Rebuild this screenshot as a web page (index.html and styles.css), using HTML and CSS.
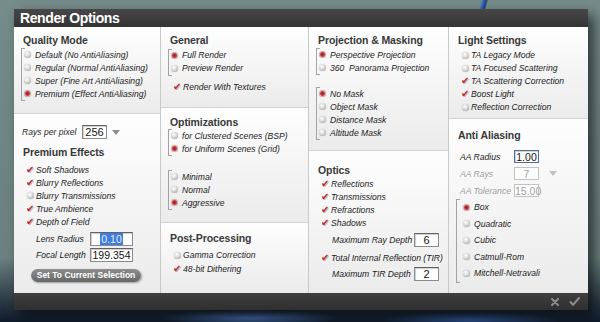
FILE: index.html
```html
<!DOCTYPE html>
<html lang="en">
<head>
    <meta charset="UTF-8">
    <meta name="viewport" content="width=device-width, initial-scale=1.0">
    <title>Render Options</title>
    <link rel="stylesheet" href="styles.css">
</head>
<body>
    <div class="dialog">
        <div class="titlebar">Render Options</div>

        <div class="panel">
            <!-- Column 1 -->
            <div class="col">
                <div class="sec sec-quality">
                    <div class="hd">Quality Mode</div>
                    <div class="grp grp-top">
                        <div class="item"><span class="radio"></span>Default (No AntiAliasing)</div>
                        <div class="item"><span class="radio"></span>Regular (Normal AntiAliasing)</div>
                        <div class="item"><span class="radio"></span>Super (Fine Art AntiAliasing)</div>
                        <div class="item"><span class="radio on"></span>Premium (Effect AntiAliasing)</div>
                    </div>
                </div>
                <div class="sec sec-effects">
                    <div class="rays">
                        <span class="rays-label">Rays per pixel</span>
                        <span class="box box-rays">256</span>
                        <span class="arrow"></span>
                    </div>
                    <div class="hd hd-gap">Premium Effects</div>
                    <div class="list list-effects">
                        <div class="item chk"><span class="tick">✔</span>Soft Shadows</div>
                        <div class="item chk"><span class="tick">✔</span>Blurry Reflections</div>
                        <div class="item chk"><span class="radio"></span>Blurry Transmissions</div>
                        <div class="item chk"><span class="tick">✔</span>True Ambience</div>
                        <div class="item chk"><span class="tick">✔</span>Depth of Field</div>
                    </div>
                    <div class="field field-lens">
                        <span class="flabel">Lens Radius</span>
                        <span class="box box-wide"><span class="sel">0.10</span></span>
                    </div>
                    <div class="field field-lens field-next">
                        <span class="flabel">Focal Length</span>
                        <span class="box box-wide">199.354</span>
                    </div>
                    <div class="btn">Set To Current Selection</div>
                </div>
            </div>

            <!-- Column 2 -->
            <div class="col">
                <div class="sec sec-general">
                    <div class="hd">General</div>
                    <div class="grp grp-general">
                        <div class="item"><span class="radio on"></span>Full Render</div>
                        <div class="item"><span class="radio"></span>Preview Render</div>
                    </div>
                    <div class="item chk item-textures"><span class="tick">✔</span>Render With Textures</div>
                </div>
                <div class="sec sec-optim">
                    <div class="hd">Optimizations</div>
                    <div class="grp">
                        <div class="item"><span class="radio"></span>for Clustered Scenes (BSP)</div>
                        <div class="item"><span class="radio on"></span>for Uniform Scenes (Grid)</div>
                    </div>
                    <div class="grp grp-apart">
                        <div class="item"><span class="radio"></span>Minimal</div>
                        <div class="item"><span class="radio"></span>Normal</div>
                        <div class="item"><span class="radio on"></span>Aggressive</div>
                    </div>
                </div>
                <div class="sec sec-post">
                    <div class="hd">Post-Processing</div>
                    <div class="list list-post">
                        <div class="item chk"><span class="radio"></span>Gamma Correction</div>
                        <div class="item chk"><span class="tick">✔</span>48-bit Dithering</div>
                    </div>
                </div>
            </div>

            <!-- Column 3 -->
            <div class="col">
                <div class="sec sec-projection">
                    <div class="hd">Projection &amp; Masking</div>
                    <div class="grp grp-top">
                        <div class="item"><span class="radio on"></span>Perspective Projection</div>
                        <div class="item"><span class="radio"></span>360&nbsp; Panorama Projection</div>
                    </div>
                    <div class="grp grp-mask">
                        <div class="item"><span class="radio on"></span>No Mask</div>
                        <div class="item"><span class="radio"></span>Object Mask</div>
                        <div class="item"><span class="radio"></span>Distance Mask</div>
                        <div class="item"><span class="radio"></span>Altitude Mask</div>
                    </div>
                </div>
                <div class="sec sec-optics">
                    <div class="hd">Optics</div>
                    <div class="list">
                        <div class="item chk"><span class="tick">✔</span>Reflections</div>
                        <div class="item chk"><span class="tick">✔</span>Transmissions</div>
                        <div class="item chk"><span class="tick">✔</span>Refractions</div>
                        <div class="item chk"><span class="tick">✔</span>Shadows</div>
                    </div>
                    <div class="field field-depth">
                        <span class="flabel">Maximum Ray Depth</span>
                        <span class="box box-small">6</span>
                    </div>
                    <div class="item chk item-tir"><span class="tick">✔</span>Total Internal Reflection (TIR)</div>
                    <div class="field field-depth field-tir">
                        <span class="flabel">Maximum TIR Depth</span>
                        <span class="box box-small">2</span>
                    </div>
                </div>
            </div>

            <!-- Column 4 -->
            <div class="col">
                <div class="sec sec-light">
                    <div class="hd">Light Settings</div>
                    <div class="list list-light">
                        <div class="item chk"><span class="radio"></span>TA Legacy Mode</div>
                        <div class="item chk"><span class="radio"></span>TA Focused Scattering</div>
                        <div class="item chk"><span class="tick">✔</span>TA Scattering Correction</div>
                        <div class="item chk"><span class="tick">✔</span>Boost Light</div>
                        <div class="item chk"><span class="radio"></span>Reflection Correction</div>
                    </div>
                </div>
                <div class="sec sec-aa">
                    <div class="hd">Anti Aliasing</div>
                    <div class="aa-fields">
                        <div class="field field-aa">
                            <span class="flabel">AA Radius</span>
                            <span class="box box-aa focus">1.00</span>
                        </div>
                        <div class="field field-aa off">
                            <span class="flabel">AA Rays</span>
                            <span class="box box-aa">7</span>
                            <span class="arrow arrow-off"></span>
                        </div>
                        <div class="field field-aa off">
                            <span class="flabel">AA Tolerance</span>
                            <span class="box box-aa">15.00</span>
                        </div>
                    </div>
                    <div class="grp grp-filter">
                        <div class="item"><span class="radio on"></span>Box</div>
                        <div class="item"><span class="radio"></span>Quadratic</div>
                        <div class="item"><span class="radio"></span>Cubic</div>
                        <div class="item"><span class="radio"></span>Catmull-Rom</div>
                        <div class="item"><span class="radio"></span>Mitchell-Netravali</div>
                    </div>
                </div>
            </div>
        </div>

        <div class="footer">
            <svg class="icon" width="8" height="8" viewBox="0 0 8 8"><path d="M1 1 L7 7 M7 1 L1 7"/></svg>
            <svg class="icon" width="11" height="9" viewBox="0 0 11 9"><path d="M1.5 5 L4 7.8 L10 1"/></svg>
        </div>
    </div>
</body>
</html>
```

FILE: styles.css
```css
body {
    margin: 0;
    height: 322px;
    overflow: hidden;
    font-family: 'Liberation Sans', Arial, sans-serif;
    color: #1c1c1c;
    background:
        linear-gradient(105deg, transparent 35%, #3f6fc4 45%, #1d3f86 60%, transparent 70%) 474px 0 / 18px 10px no-repeat,
        radial-gradient(ellipse 90px 8px at 250px 318px, rgba(80, 130, 210, 0.7), transparent),
        radial-gradient(ellipse 90px 8px at 470px 320px, rgba(60, 110, 200, 0.6), transparent),
        linear-gradient(to bottom, #768c8a 0, #6b817f 80%, #24323f 95%, #0f1b2b 100%);
}

.dialog {
    width: 574px;
    margin: 9px 0 0 14px;
    box-shadow: 6px 6px 12px rgba(0, 0, 0, 0.6);
}

.titlebar {
    height: 18px;
    line-height: 19px;
    padding-left: 6px;
    background: linear-gradient(#474747, #343434);
    color: #fff;
    font-size: 14px;
    font-weight: bold;
    letter-spacing: -0.4px;
}

.panel {
    display: grid;
    grid-template-columns: 146px 148px 140px 140px;
    height: 266px;
    background: #eee;
}

.col {
    display: flex;
    flex-direction: column;
    border-left: 1px solid #c9c9c9;
}

.col:first-child {
    border-left: none;
}

.sec {
    box-sizing: border-box;
    padding-top: 6px;
    background: linear-gradient(#fefefe, #ebebeb);
    border-top: 1px solid #d3d3d3;
}

.sec:first-child {
    border-top: none;
}

.sec:last-child {
    flex: 1;
}

.hd {
    margin-left: 9px;
    height: 14px;
    line-height: 14px;
    font-size: 10.5px;
    font-weight: bold;
    color: #383838;
    letter-spacing: -0.1px;
}

.item {
    display: flex;
    align-items: center;
    height: 13px;
    font-size: 8.6px;
    font-style: italic;
    white-space: nowrap;
}

.item.chk {
    padding-left: 12px;
}

.grp {
    margin-left: 7px;
    padding: 0 0 1px 2px;
    border-left: 1px solid #a2a2a2;
    background:
        linear-gradient(#a2a2a2, #a2a2a2) left top / 3px 1px no-repeat,
        linear-gradient(#a2a2a2, #a2a2a2) left bottom / 3px 1px no-repeat;
}

.radio {
    flex: none;
    width: 7px;
    height: 7px;
    margin-right: 4px;
    border-radius: 50%;
    background: radial-gradient(circle at 40% 35%, #fff 0, #dedede 40%, #979797 100%);
    box-shadow: 0 0 1px rgba(0, 0, 0, 0.3);
}

.radio.on {
    background: radial-gradient(circle at 50% 50%, #9e1a22 0, #c23a40 38%, #dca9aa 58%, #9c9c9c 100%);
}

.item.chk .radio {
    margin-left: 1px;
    margin-right: 2px;
}

.tick {
    flex: none;
    width: 8px;
    margin-right: 2px;
    font-family: 'DejaVu Sans', sans-serif;
    font-style: normal;
    font-size: 10px;
    line-height: 10px;
    color: #c0262d;
    text-shadow: 1px 1px 0 rgba(0, 0, 0, 0.25);
}

.box {
    box-sizing: border-box;
    display: inline-block;
    height: 14px;
    line-height: 13px;
    background: #fff;
    border: 1px solid #8a8a8a;
    border-top-color: #626262;
    box-shadow: inset 1px 1px 1px rgba(0, 0, 0, 0.2);
    font-size: 10.5px;
    font-style: normal;
    text-align: center;
    color: #151515;
}

.arrow {
    width: 0;
    height: 0;
    margin-left: 5px;
    border-left: 4px solid transparent;
    border-right: 4px solid transparent;
    border-top: 5px solid #8c8c8c;
}

/* Column 1 */
.sec-quality {
    height: 86px;
}

.grp-top {
    margin-top: 1px;
}

.rays {
    display: flex;
    align-items: center;
    height: 18px;
    margin-top: 3px;
    padding-left: 8px;
}

.rays-label {
    width: 60px;
    font-size: 8.6px;
    font-style: italic;
}

.box-rays {
    width: 25px;
    font-size: 11px;
}

.hd-gap {
    margin-top: 4px;
}

.list-effects {
    margin-top: 4px;
}

.field {
    display: flex;
    align-items: center;
    height: 16px;
    font-size: 8.6px;
    font-style: italic;
    white-space: nowrap;
}

.field-lens {
    margin-top: 3px;
    padding-left: 22px;
}

.field-lens.field-next {
    margin-top: 0;
}

.field-lens .flabel {
    width: 54px;
}

.box-wide {
    width: 43px;
}

.sel {
    padding: 0 1px;
    background: #3d7ee0;
    color: #e8f0ff;
}

.btn {
    width: 110px;
    height: 13px;
    margin: 6px 0 0 17px;
    line-height: 13px;
    border-radius: 7px;
    background: linear-gradient(#8d8d8d, #666);
    box-shadow: 1px 1px 2px rgba(0, 0, 0, 0.35);
    color: #fff;
    font-size: 8.5px;
    font-weight: bold;
    text-align: center;
}

/* Column 2 */
.sec-general {
    height: 80px;
}

.grp-general {
    margin-top: 1.5px;
}

.item-textures {
    margin-top: 5px;
}

.sec-optim {
    height: 115px;
    padding-top: 7px;
}

.grp-apart {
    margin-top: 14px;
}

.sec-post {
    padding-top: 8px;
}

.list-post {
    margin-top: 3px;
}

.list-post .item {
    height: 14px;
}

/* Column 3 */
.sec-projection {
    height: 123px;
}

.grp-mask {
    margin-top: 12px;
}

.sec-optics {
    padding-top: 12px;
}

.field-depth {
    margin-top: 2.5px;
    padding-left: 23px;
}

.field-depth .flabel {
    width: 82px;
}

.box-small {
    width: 25px;
    font-size: 11px;
}

.item-tir {
    margin-top: 3.5px;
}

.field-depth.field-tir {
    margin-top: 2px;
}

/* Column 4 */
.sec-light {
    height: 91px;
}

.list-light {
    margin-top: 1.5px;
}

.list-light .radio {
    margin-left: 2px;
    margin-right: 1px;
}

.sec-aa {
    padding-top: 9px;
}

.aa-fields {
    margin-top: 6px;
}

.field-aa {
    height: 17px;
    padding-left: 11px;
}

.field-aa .flabel {
    width: 54px;
}

.box-aa {
    width: 25px;
    height: 13px;
    line-height: 12px;
    font-size: 10.5px;
}

.box-aa.focus {
    border-color: #4f6f96;
}

.field-aa.off {
    color: #9d9d9d;
}

.field-aa.off .box {
    color: #a0a0a0;
    border-color: #c2c2c2;
    box-shadow: none;
}

.arrow-off {
    margin-left: 10px;
    border-top-color: #c2c2c2;
}

.grp-filter {
    padding-left: 6px;
}

.grp-filter .item {
    height: 16.5px;
}

.footer {
    display: flex;
    align-items: center;
    justify-content: flex-end;
    gap: 10px;
    height: 17px;
    padding-right: 8px;
    background: linear-gradient(#3f3f3f, #2f2f2f);
}

.icon path {
    fill: none;
    stroke: #8d8d8d;
    stroke-width: 2;
    stroke-linecap: round;
    stroke-linejoin: round;
}
```
